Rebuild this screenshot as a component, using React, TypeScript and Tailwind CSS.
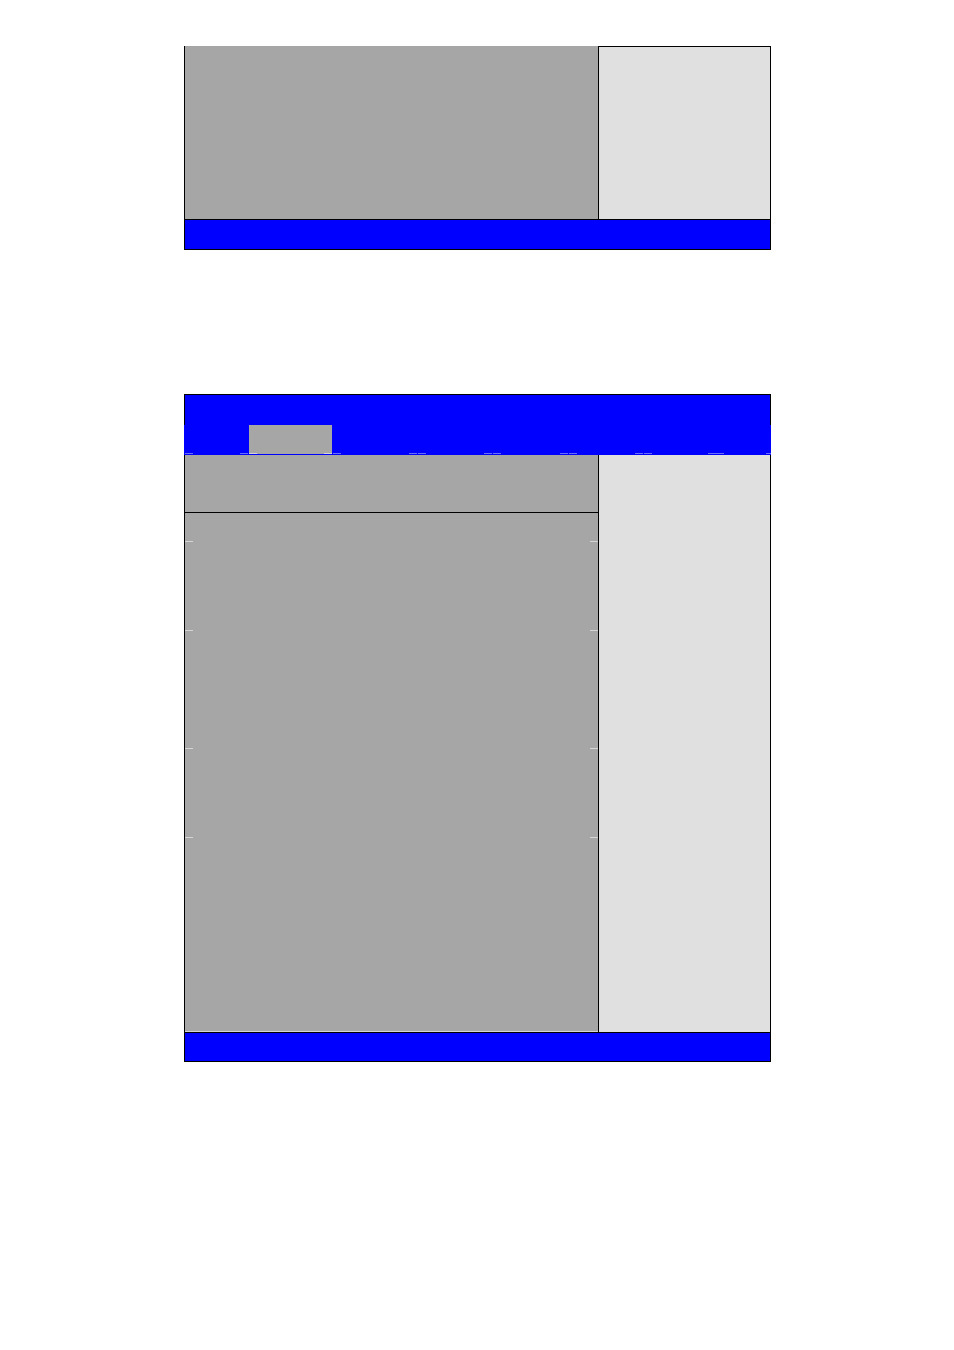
import React from "react";

// One-pixel tick line in the tab strip
function Dash({ light = false, w = "w-[8px]" }: { light?: boolean; w?: string }) {
  return <div className={`${w} h-px ${light ? "bg-[#d6d6d6]" : "bg-[#6b6bff]"}`} />;
}

// Bottom edge of the tab strip with its tick marks
function TabStripEdge() {
  return (
    <div className="flex h-px">
      <div className="w-px" />
      <Dash />
      <div className="w-[47px]" />
      <Dash />
      <div className="w-px" />
      <Dash light />
      <div className="w-[67px] bg-[#a6a6a6]" />
      <Dash light />
      <div className="w-px" />
      <Dash />
      <div className="w-[68px]" />
      <Dash />
      <div className="w-px" />
      <Dash />
      <div className="w-[58px]" />
      <Dash />
      <div className="w-px" />
      <Dash />
      <div className="w-[59px]" />
      <Dash />
      <div className="w-px" />
      <Dash />
      <div className="w-[58px]" />
      <Dash />
      <div className="w-px" />
      <Dash />
      <div className="w-[56px]" />
      <Dash />
      <Dash />
      <div className="w-[42px]" />
      <Dash w="w-[5px]" />
    </div>
  );
}

// Pair of edge markers on both sides of the settings list
function EdgeTicks() {
  return (
    <div className="flex justify-between h-px">
      <div className="w-[8px] bg-[#d4d4d4]" />
      <div className="w-[8px] bg-[#d4d4d4]" />
    </div>
  );
}

export default function App() {
  return (
    <div className="w-[954px] h-[1350px] bg-white pt-[46px] pl-[184px]">
      {/* First setup screen (lower part) */}
      <div className="w-[587px] flex flex-col border-x border-black">
        <div className="flex h-[173px]">
          <div className="w-[413px] bg-[#a6a6a6]" />
          <div className="flex-1 bg-[#e0e0e0] border-l border-t border-black" />
        </div>
        <div className="h-[31px] bg-[#0000ff] border-y border-black" />
      </div>

      {/* Second setup screen */}
      <div className="mt-[144px] w-[587px] flex flex-col">
        <div className="h-[31px] bg-[#0000ff] border-t border-x border-black" />
        <div className="flex flex-col h-[30px] bg-[#0000ff]">
          <div className="ml-[65px] w-[83px] h-[28px] bg-[#a6a6a6]" />
          <TabStripEdge />
        </div>
        <div className="flex h-[577px] border-x border-black">
          <div className="w-[413px] flex flex-col bg-[#a6a6a6] border-b border-[#d4d4d4]">
            <div className="h-[58px] border-b border-black" />
            <div className="h-[28px]" />
            <EdgeTicks />
            <div className="h-[88px]" />
            <EdgeTicks />
            <div className="h-[117px]" />
            <EdgeTicks />
            <div className="h-[88px]" />
            <EdgeTicks />
            <div className="flex-1" />
          </div>
          <div className="flex-1 bg-[#e0e0e0] border-l border-black" />
        </div>
        <div className="h-[30px] bg-[#0000ff] border-y border-x border-black" />
      </div>
    </div>
  );
}
